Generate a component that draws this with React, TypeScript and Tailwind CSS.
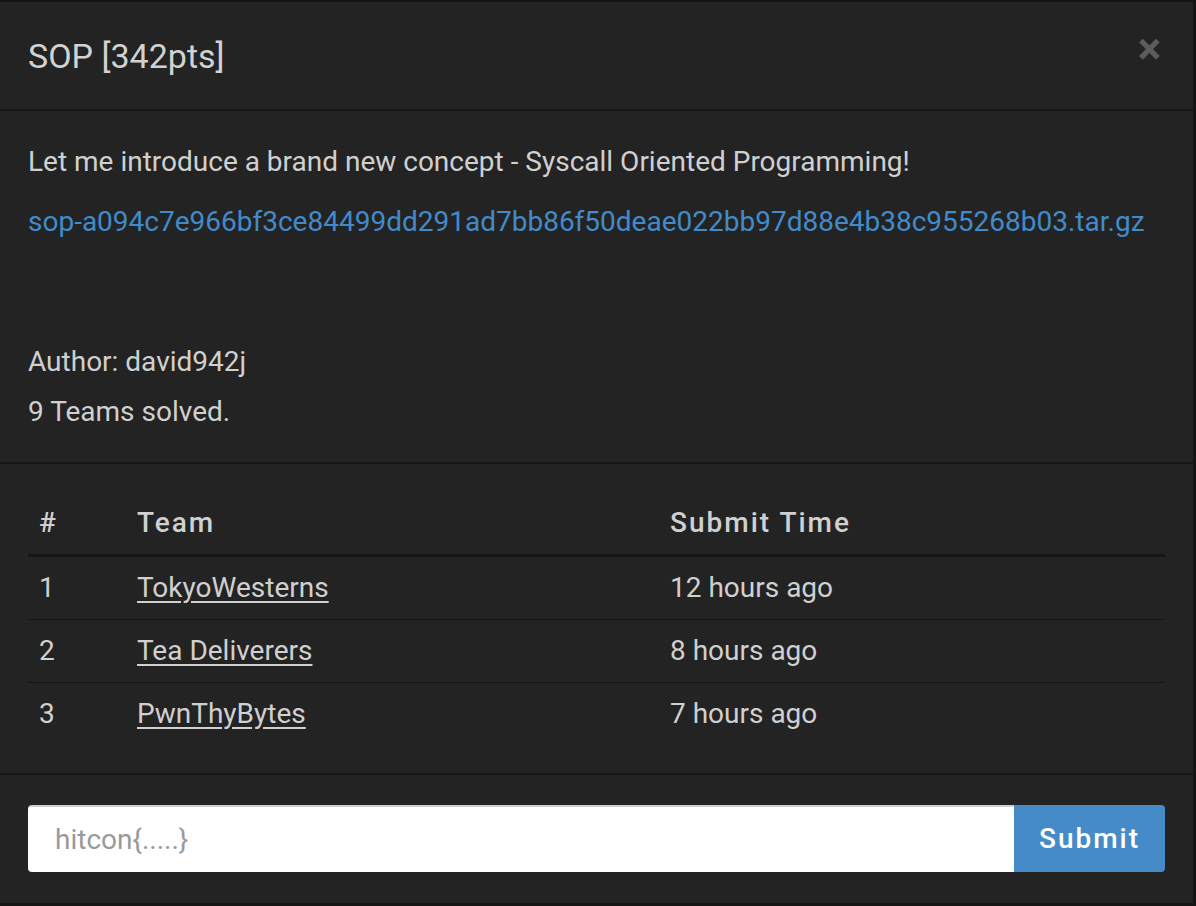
const solves = [
  { rank: 1, team: "TokyoWesterns", time: "12 hours ago" },
  { rank: 2, team: "Tea Deliverers", time: "8 hours ago" },
  { rank: 3, team: "PwnThyBytes", time: "7 hours ago" },
];

export default function App() {
  return (
    <div className="h-[906px] w-[1196px] overflow-hidden bg-[#141414] font-['Roboto',sans-serif]">
      <div className="flex h-[903px] w-[1196px] flex-col border-t-2 border-r-[3px] border-[#141414] bg-[#232323]">
        {/* header */}
        <div className="flex h-[109px] shrink-0 items-center justify-between border-b-2 border-[#161616] pl-[28px] pr-[32px]">
          <h4 className="text-[34px] leading-none text-[#d2d2d2]">SOP [342pts]</h4>
          <button className="-mt-[14px] text-[44px] font-bold leading-none text-[#5c5c5c]">×</button>
        </div>

        {/* body */}
        <div className="shrink-0 border-b-2 border-[#161616] px-[28px] pt-[34px] pb-[33px] text-[28px] leading-[34px] text-[#d0d0d0]">
          <p className="mb-[26px]">Let me introduce a brand new concept - Syscall Oriented Programming!</p>
          <p>
            <a className="text-[#428bca]">sop-a094c7e966bf3ce84499dd291ad7bb86f50deae022bb97d88e4b38c955268b03.tar.gz</a>
          </p>
          <p className="mt-[106px]">Author: david942j</p>
          <p className="mt-[16px]">9 Teams solved.</p>
        </div>

        {/* solves table */}
        <div className="shrink-0 border-b-2 border-[#161616] px-[28px] pt-[28px] pb-[28px]">
          <div className="grid h-[65px] grid-cols-[98px_533px_1fr] items-center border-b-[3px] border-[#161616] text-[28px] font-medium tracking-[2px] text-[#d0d0d0]">
            <span className="pl-[11px]">#</span>
            <span className="pl-[11px]">Team</span>
            <span className="pl-[11px]">Submit Time</span>
          </div>
          {solves.map((s, i) => (
            <div
              key={s.rank}
              className={`grid grid-cols-[98px_533px_1fr] items-center text-[28px] text-[#d0d0d0] ${
                i < solves.length - 1 ? "h-[63px] border-b border-[#161616]" : "h-[62px]"
              }`}
            >
              <span className="pl-[11px]">{s.rank}</span>
              <span className="pl-[11px]">
                <a className="underline underline-offset-[4px]">{s.team}</a>
              </span>
              <span className="pl-[11px]">{s.time}</span>
            </div>
          ))}
        </div>

        {/* flag form */}
        <div className="flex px-[28px] pt-[30px]">
          <input
            placeholder="hitcon{.....}"
            className="h-[67px] flex-1 rounded-l-[4px] border-t-2 border-[#cfcfcf] bg-white px-[27px] text-[28px] text-[#333] outline-none placeholder:text-[#9a9a9a]"
          />
          <button className="h-[67px] w-[151px] rounded-r-[4px] bg-[#458bc8] text-[28px] font-medium tracking-[2px] text-white">
            Submit
          </button>
        </div>
      </div>
    </div>
  );
}
